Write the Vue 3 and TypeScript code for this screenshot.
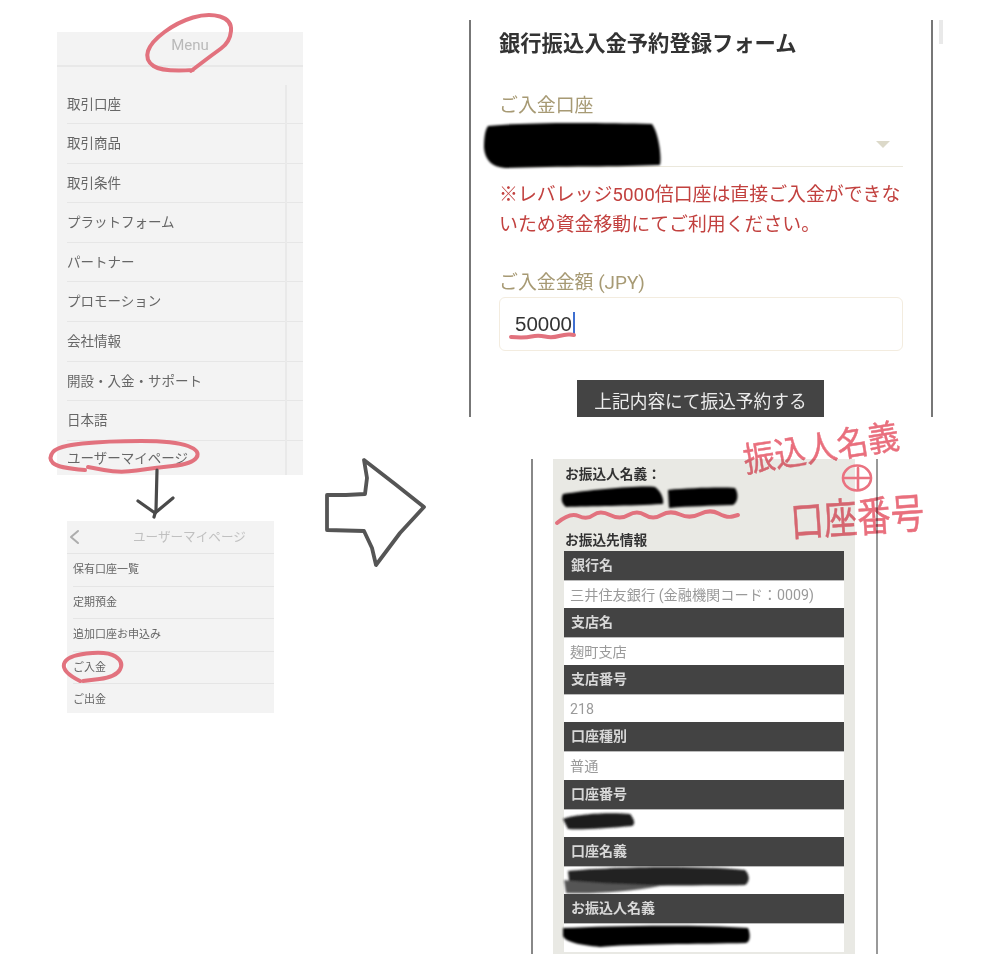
<script setup lang="ts">
type Pt = [number, number]

const menuItems: string[] = [
  '取引口座', '取引商品', '取引条件', 'プラットフォーム', 'パートナー',
  'プロモーション', '会社情報', '開設・入金・サポート', '日本語', 'ユーザーマイページ',
]
const subItems: string[] = ['保有口座一覧', '定期預金', '追加口座お申込み', 'ご入金', 'ご出金']
const bankRows: { label: string; value: string }[] = [
  { label: '銀行名', value: '三井住友銀行 (金融機関コード：0009)' },
  { label: '支店名', value: '麹町支店' },
  { label: '支店番号', value: '218' },
  { label: '口座種別', value: '普通' },
  { label: '口座番号', value: '' },
  { label: '口座名義', value: '' },
  { label: 'お振込人名義', value: '' },
]

function smooth(points: Pt[], closed = false): string {
  const mid = (a: Pt, b: Pt): Pt => [(a[0] + b[0]) / 2, (a[1] + b[1]) / 2]
  let d = `M${points[0][0]} ${points[0][1]}`
  for (let i = 1; i < points.length - 1; i++) {
    const m = mid(points[i], points[i + 1])
    d += ` Q${points[i][0]} ${points[i][1]} ${m[0]} ${m[1]}`
  }
  const last = points[points.length - 1]
  d += ` L${last[0]} ${last[1]}`
  return closed ? d + 'Z' : d
}

const pinkLoops: string[] = [
  smooth([[193, 70], [162, 72], [145, 60], [151, 42], [178, 22], [208, 13], [232, 20], [230, 42], [212, 55], [191, 71]]),
  smooth([[85, 470], [58, 468], [48, 458], [58, 446], [107, 441], [175, 441], [201, 451], [192, 464], [153, 468], [120, 473], [88, 467]]),
  smooth([[80, 681], [62, 672], [66, 656], [107, 651], [124, 662], [116, 677], [83, 681]]),
  smooth([[557, 523], [570, 512], [587, 520], [600, 510], [620, 520], [637, 510], [653, 520], [670, 510], [690, 519], [710, 509], [727, 518], [738, 515]]),
  smooth([[511, 337], [525, 338], [538, 335], [552, 338], [566, 334], [574, 335]]),
]
</script>

<template>
  <div class="page">
    <section class="left">
      <div class="menu">
        <header class="menu-head">Menu</header>
        <ul class="menu-list">
          <li v-for="item in menuItems" :key="item" class="menu-item">{{ item }}</li>
        </ul>
      </div>
      <div class="sub">
        <header class="sub-head">
          <svg class="chev" width="66" height="32" viewBox="0 0 66 32" fill="none" aria-hidden="true">
            <path d="M11 10 L4 16 L11 22" stroke="#adadad" stroke-width="2" stroke-linecap="round" stroke-linejoin="round" />
          </svg>
          <span class="sub-title">ユーザーマイページ</span>
        </header>
        <ul class="sub-list">
          <li v-for="item in subItems" :key="item" class="sub-item">{{ item }}</li>
        </ul>
      </div>
    </section>

    <section class="right">
      <div class="form-row">
        <div class="form">
          <h1 class="title">銀行振込入金予約登録フォーム</h1>
          <div class="label first">ご入金口座</div>
          <div class="select"><span class="tri"></span></div>
          <p class="note">※レバレッジ5000倍口座は直接ご入金ができないため資金移動にてご利用ください。</p>
          <div class="label second">ご入金金額 (JPY)</div>
          <div class="input">50000<span class="caret"></span></div>
          <div class="btn">上記内容にて振込予約する</div>
        </div>
        <div class="stub"></div>
      </div>

      <div class="bank">
        <div class="bank-inner">
          <div class="bold first-line">お振込人名義：</div>
          <div class="name-gap"></div>
          <div class="bold second-line">お振込先情報</div>
          <div class="table">
            <template v-for="row in bankRows" :key="row.label">
              <div class="th">{{ row.label }}</div>
              <div class="td">{{ row.value }}</div>
            </template>
          </div>
        </div>
      </div>
    </section>

    <svg class="ink" width="984" height="971" viewBox="0 0 984 971" fill="none" aria-hidden="true">
      <defs>
        <filter id="soft" x="-10%" y="-30%" width="120%" height="160%">
          <feGaussianBlur stdDeviation="1.3" />
        </filter>
      </defs>
      <!-- redactions -->
      <g fill="#060606" filter="url(#soft)">
        <path d="M488 126 C530 122 600 123 652 124 C658 132 662 155 660 165 C620 167 560 166 505 168 C492 167 485 160 484 148 C484 138 485 130 488 126Z" />
        <path d="M563 494 C590 490 640 485 655 487 C662 492 664 500 663 504 C630 506 590 506 566 507 C561 503 561 498 563 494Z" />
        <path d="M668 490 C690 488 720 487 735 488 C739 494 738 502 733 505 C710 506 690 506 669 508Z" />
        <path d="M563 819 C575 814 610 812 630 814 C634 819 636 824 632 826 C610 828 580 830 568 829Z" fill="#1c1c1c" />
        <path d="M568 871 C610 867 690 865 745 870 C750 875 750 882 745 885 C700 886 610 884 570 890Z" fill="#222" />
        <path d="M564 880 C600 884 640 884 660 886 C630 892 590 894 566 893Z" fill="#555" />
        <path d="M563 928 C610 926 690 924 748 928 C751 935 750 942 746 943 C700 944 630 944 600 947 C580 945 565 942 563 936Z" />
      </g>
      <!-- pink marks -->
      <g stroke="#e2727e" stroke-width="4" stroke-linecap="round" stroke-linejoin="round">
        <path v-for="d in pinkLoops" :key="d" :d="d" />
      </g>
      <!-- grey pen arrows -->
      <g stroke="#4a4a4a" stroke-width="3.2" stroke-linecap="round" stroke-linejoin="round">
        <path d="M157 470 L156 510 L154 517" />
        <path d="M138 501 L155 513 L173 498" />
        <path d="M327 495 L346 495 L365 494 L367 478 L364 460 L395 484 L424 507 L400 533 L376 565 L372 548 L364 531 L327 530 Z" stroke="#555" stroke-width="3.8" />
      </g>
      <!-- plus sign of the note -->
      <g stroke="#ea7280" stroke-width="2.6" stroke-linecap="round">
        <ellipse cx="857" cy="478" rx="14" ry="12.5" />
        <path d="M845 478 L869 478 M858 468 L858 489" />
      </g>
    </svg>

    <div class="hand hand-a">振込人名義</div>
    <div class="hand hand-b">口座番号</div>
  </div>
</template>

<style>
html,
body {
  margin: 0;
  background: #fff;
}
</style>

<style scoped>
.page {
  position: relative;
  width: 984px;
  height: 971px;
  overflow: hidden;
  display: grid;
  grid-template-columns: 469px 1fr;
  background: #fff;
  font-family: Roboto, "Noto Sans CJK JP", sans-serif;
  filter: blur(0.35px);
}
ul {
  list-style: none;
  margin: 0;
  padding: 0;
}

/* left column */
.left {
  display: flex;
  flex-direction: column;
  align-items: flex-start;
  padding: 32px 0 0 57px;
}
.menu {
  position: relative;
  width: 246px;
  height: 443px;
  background: #f3f3f3;
  overflow: hidden;
}
.menu-head {
  height: 33px;
  line-height: 27px;
  border-bottom: 2px solid #e8e8e8;
  text-align: center;
  font-size: 15px;
  color: #b9b9b9;
  padding-left: 20px;
}
.menu-list {
  position: relative;
  margin-top: 17.5px;
  margin-left: 10px;
}
.menu-list::before {
  content: "";
  position: absolute;
  top: 0;
  bottom: 0;
  left: 218px;
  width: 1.5px;
  background: #e9e9e9;
}
.menu-item {
  height: 39.6px;
  box-sizing: border-box;
  border-bottom: 1.5px solid #e6e6e6;
  font-size: 13.5px;
  line-height: 38px;
  color: #666;
}
.menu-item:last-child {
  border-bottom: none;
  line-height: 35px;
}
.sub {
  width: 207px;
  height: 192px;
  margin: 46px 0 0 10px;
  background: #f3f3f3;
}
.sub-head {
  display: flex;
  align-items: center;
  height: 32px;
  border-bottom: 1px solid #e5e5e5;
}
.chev {
  flex: none;
}
.sub-title {
  font-size: 12.6px;
  line-height: 30px;
  color: #c0c0c0;
}
.sub-item {
  height: 32.5px;
  box-sizing: border-box;
  margin-left: 6px;
  border-bottom: 1px solid #e5e5e5;
  font-size: 11px;
  line-height: 31px;
  color: #666;
}
.sub-item:last-child {
  border-bottom: none;
}

/* right column */
.right {
  display: flex;
  flex-direction: column;
}
.form-row {
  display: flex;
  gap: 6px;
  margin-top: 20px;
}
.form {
  width: 464px;
  height: 397px;
  box-sizing: border-box;
  padding: 0 28px 0 28px;
  border-left: 2px solid #777;
  border-right: 2px solid #777;
  overflow: hidden;
  flex: none;
}
.stub {
  width: 4px;
  height: 24px;
  background: #e9e9e9;
}
.title {
  margin: 9px 0 0;
  font-size: 21.3px;
  font-weight: 700;
  line-height: 30px;
  color: #333;
}
.label {
  font-size: 18.9px;
  line-height: 28px;
  color: #a79a74;
}
.label.first {
  margin-top: 33px;
}
.label.second {
  margin-top: 29px;
}
.select {
  display: flex;
  align-items: flex-start;
  justify-content: flex-end;
  height: 46px;
  border-bottom: 1.5px solid #ebe8dc;
  padding-right: 13px;
}
.tri {
  width: 0;
  height: 0;
  margin-top: 21px;
  border-left: 7px solid transparent;
  border-right: 7px solid transparent;
  border-top: 7px solid #dcd9c9;
}
.note {
  margin: 13px 0 0;
  font-size: 18.9px;
  line-height: 30px;
  color: #c2413f;
}
.input {
  height: 54px;
  box-sizing: border-box;
  display: flex;
  align-items: center;
  padding-left: 15px;
  border: 1.5px solid #f3ecdf;
  border-radius: 6px;
  font-family: "Liberation Sans", sans-serif;
  font-size: 20.5px;
  color: #333;
}
.caret {
  display: inline-block;
  width: 2px;
  height: 24px;
  margin-left: 1px;
  background: #3f6fd0;
}
.btn {
  width: 247px;
  height: 44px;
  margin: 29px 0 0 78px;
  background: #444;
  color: #ececec;
  text-align: center;
  font-size: 17.7px;
  line-height: 44px;
}

.bank {
  width: 347px;
  height: 495px;
  margin: 42px 0 0 62px;
  box-sizing: border-box;
  padding-left: 20px;
  border-left: 2px solid #888;
  border-right: 2px solid #999;
}
.bank-inner {
  width: 302px;
  height: 495px;
  box-sizing: border-box;
  padding: 6px 11px 0;
  background: #e9e9e4;
}
.bold {
  font-size: 13.7px;
  font-weight: 700;
  color: #333;
  margin-left: 1px;
}
.first-line {
  line-height: 18px;
}
.name-gap {
  height: 47px;
}
.second-line {
  line-height: 20px;
  margin-bottom: 1px;
}
.table {
  display: flex;
  flex-direction: column;
}
.th {
  height: 29px;
  line-height: 29px;
  border-bottom: 1px solid #bbb;
  padding-left: 7px;
  background: #434343;
  color: #d8d8d8;
  font-size: 14px;
  font-weight: 700;
}
.td {
  height: 27.15px;
  line-height: 28px;
  padding-left: 6px;
  background: #fff;
  color: #9a9a9a;
  font-size: 14.2px;
}
.td:last-child {
  height: 28px;
}

/* overlays */
.ink {
  position: absolute;
  inset: 0;
  pointer-events: none;
}
.hand {
  position: absolute;
  color: #e96f7d;
  font-family: "Noto Sans CJK JP", sans-serif;
  white-space: nowrap;
  mix-blend-mode: multiply;
  -webkit-text-stroke: 0.4px #e96f7d;
}
.hand-a {
  left: 742px;
  top: 425px;
  font-size: 31.5px;
  line-height: 40px;
  transform: rotate(-9deg) scaleY(1.1);
}
.hand-b {
  left: 790px;
  top: 492px;
  font-size: 33.5px;
  line-height: 46px;
  transform: rotate(-4deg) scaleY(1.25);
}
</style>
